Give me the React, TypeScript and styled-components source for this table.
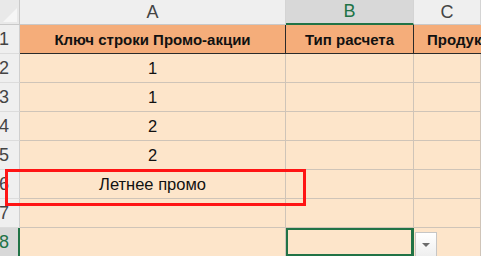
import styled, { createGlobalStyle, css } from 'styled-components'

const GlobalStyle = createGlobalStyle`
  html, body {
    margin: 0;
    padding: 0;
    background: #ffffff;
    overflow: hidden;
  }
`

const green = '#217346'
const gridLine = '#cfc4b8'
const headerFont = `'Liberation Sans', Arial, sans-serif`

const Sheet = styled.div`
  position: relative;
  width: 481px;
  height: 256px;
  overflow: hidden;
`

const Grid = styled.div`
  display: grid;
  grid-template-columns: 20px 266px 128px 1fr;
  grid-template-rows: 25px repeat(8, 29px);
  font-family: ${headerFont};
`

const Corner = styled.div`
  background: #e9e9e9;
  border-right: 1px solid #c9c9c9;
  border-bottom: 1px solid #c9c9c9;
  position: relative;
  overflow: hidden;
  &::after {
    content: '';
    position: absolute;
    right: 2px;
    bottom: 2px;
    border-left: 14px solid transparent;
    border-bottom: 14px solid #f6f6f6;
  }
`

const ColHead = styled.div<{ $active?: boolean }>`
  display: flex;
  align-items: center;
  justify-content: center;
  font-size: 18px;
  color: #444;
  background: #efefef;
  border-right: 1px solid #d4d4d4;
  border-bottom: 1px solid #c9c9c9;
  ${(p) =>
    p.$active &&
    css`
      background: #d8d8d8;
      color: ${green};
      border-bottom: 2px solid ${green};
    `}
`

const RowHead = styled.div<{ $active?: boolean }>`
  display: flex;
  align-items: center;
  font-size: 18px;
  color: #444;
  background: #efefef;
  border-right: 1px solid #cfcfcf;
  border-bottom: 1px solid #dcdcdc;
  overflow: hidden;
  text-indent: -1px;
  ${(p) =>
    p.$active &&
    css`
      background: #d8d8d8;
      color: ${green};
      border-right: 2px solid ${green};
    `}
`

// header cells of row 1; the last column is cut by the window, so its text starts
// from a fixed inset instead of being centred
const TitleCell = styled.div<{ $clipped?: boolean }>`
  display: flex;
  align-items: center;
  justify-content: center;
  background: #f5ad7a;
  border-right: 1px solid #2a2a2a;
  border-bottom: 1px solid #2a2a2a;
  font-size: 15px;
  font-weight: bold;
  color: #111;
  white-space: nowrap;
  overflow: hidden;
  ${(p) =>
    p.$clipped &&
    css`
      justify-content: flex-start;
      padding-left: 13px;
      border-right: none;
    `}
`

const Cell = styled.div<{ $selected?: boolean }>`
  display: flex;
  align-items: center;
  justify-content: center;
  background: #fde5ca;
  border-right: 1px solid ${gridLine};
  border-bottom: 1px solid ${gridLine};
  font-size: 16.5px;
  color: #111;
  ${(p) =>
    p.$selected &&
    css`
      box-shadow: inset 0 0 0 2px ${green};
      border-right-color: ${green};
    `}
`

const Highlight = styled.div`
  position: absolute;
  left: 5px;
  top: 169px;
  width: 295px;
  height: 31px;
  border: 3px solid #ff1414;
`

const DropButton = styled.div`
  position: absolute;
  left: 415px;
  top: 232px;
  width: 22px;
  height: 26px;
  box-sizing: border-box;
  border: 1px solid #c6c6c6;
  background: linear-gradient(#ffffff, #eeeeee);
  display: flex;
  align-items: center;
  justify-content: center;
  &::after {
    content: '';
    border-left: 4px solid transparent;
    border-right: 4px solid transparent;
    border-top: 4px solid #6b6b6b;
  }
`

const rows: string[] = ['1', '1', '2', '2', 'Летнее промо', '']

export default function App() {
  return (
    <>
      <GlobalStyle />
      <Sheet>
        <Grid>
          <Corner />
          <ColHead>A</ColHead>
          <ColHead $active>B</ColHead>
          <ColHead>C</ColHead>

          <RowHead>1</RowHead>
          <TitleCell>Ключ строки Промо-акции</TitleCell>
          <TitleCell>Тип расчета</TitleCell>
          <TitleCell $clipped>Продукт</TitleCell>

          {rows.map((value, i) => (
            <Row key={i} num={i + 2} value={value} />
          ))}

          <RowHead $active>8</RowHead>
          <Cell />
          <Cell $selected />
          <Cell />
        </Grid>
        <Highlight />
        <DropButton />
      </Sheet>
    </>
  )
}

const Row = ({ num, value }: { num: number; value: string }) => (
  <>
    <RowHead>{num}</RowHead>
    <Cell>{value}</Cell>
    <Cell />
    <Cell />
  </>
)
